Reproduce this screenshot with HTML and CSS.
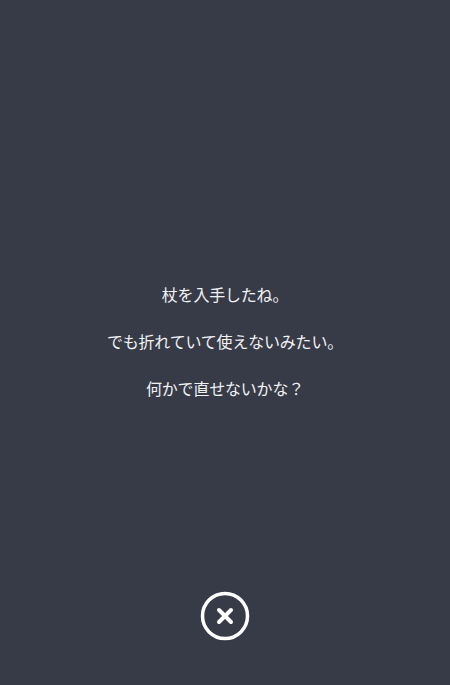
FILE: index.html
```html
<!DOCTYPE html>
<html lang="ja">
<head>
<meta charset="utf-8">
<link rel="stylesheet" href="styles.css">
</head>
<body>
<div class="screen">
  <div class="message">
    <p class="line">杖を入手したね。</p>
    <p class="line">でも折れていて使えないみたい。</p>
    <p class="line">何かで直せないかな？</p>
  </div>
  <div class="footer">
    <button class="close" aria-label="閉じる">
      <svg width="50" height="50" viewBox="0 0 50 50">
        <circle cx="25" cy="25" r="22.5" fill="none" stroke="#ffffff" stroke-width="3.5"/>
        <path d="M19 19 L31 31 M31 19 L19 31" stroke="#ffffff" stroke-width="4" stroke-linecap="round"/>
      </svg>
    </button>
  </div>
</div>
</body>
</html>
```
FILE: styles.css
```css
html, body {
  margin: 0;
  padding: 0;
  background: #373b48;
}
.screen {
  width: 450px;
  height: 685px;
  display: flex;
  flex-direction: column;
  font-family: "Noto Sans CJK JP", "Noto Sans", sans-serif;
  color: #f2f2f2;
}
.message {
  flex: 1;
  display: flex;
  flex-direction: column;
  justify-content: center;
  align-items: center;
  gap: 23px;
  padding-top: 96px;
}
.line {
  margin: 0;
  font-size: 16px;
  line-height: 24px;
  letter-spacing: -0.2px;
  text-align: center;
}
.footer {
  height: 100px;
  display: flex;
  justify-content: center;
  align-items: flex-start;
  padding-top: 6px;
  box-sizing: border-box;
}
.close {
  width: 50px;
  height: 50px;
  padding: 0;
  border: 0;
  background: transparent;
  display: block;
}
.close svg {
  display: block;
}
```
